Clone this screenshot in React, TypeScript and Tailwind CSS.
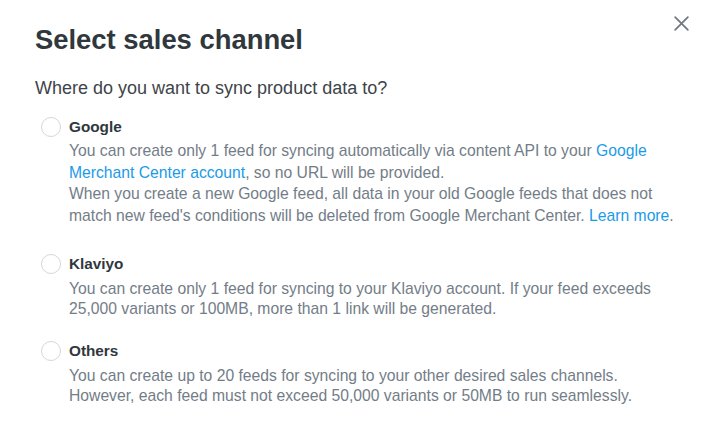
import { useState } from 'react';

type Channel = {
    id: string;
    label: string;
    leading: string;
    spacing: string;
    body: React.ReactNode;
};

const linkCls = 'text-[#1a9be8] hover:underline';

const channels: Channel[] = [
    {
        id: 'google',
        label: 'Google',
        leading: 'leading-[21.5px] mt-[2px]',
        spacing: 'mb-[27px]',
        body: (
            <>
                You can create only 1 feed for syncing automatically via content API to your{' '}
                <a href="#" className={linkCls}>Google Merchant Center account</a>, so no URL will be provided.
                <br />
                When you create a new Google feed, all data in your old Google feeds that does not match new feed's
                conditions will be deleted from Google Merchant Center.{' '}
                <a href="#" className={linkCls}>Learn more</a>.
            </>
        ),
    },
    {
        id: 'klaviyo',
        label: 'Klaviyo',
        leading: 'leading-[20px] mt-[4px]',
        spacing: 'mb-[21px]',
        body: (
            <>
                You can create only 1 feed for syncing to your Klaviyo account. If your feed exceeds 25,000 variants or
                100MB, more than 1 link will be generated.
            </>
        ),
    },
    {
        id: 'others',
        label: 'Others',
        leading: 'leading-[20px] mt-[4px]',
        spacing: '',
        body: (
            <>
                You can create up to 20 feeds for syncing to your other desired sales channels. However, each feed must
                not exceed 50,000 variants or 50MB to run seamlessly.
            </>
        ),
    },
];

export default function App() {
    const [selected, setSelected] = useState<string | null>(null);

    return (
        <div className="w-[716px] h-[440px] bg-white relative font-['Liberation_Sans',Arial,sans-serif]">
            {/* Close button */}
            <button className="absolute top-[14px] right-[25px] p-[1px] text-[#6d7882]">
                <svg width="17" height="17" viewBox="0 0 16 16" fill="none" stroke="currentColor" strokeWidth="1.6" strokeLinecap="round">
                    <path d="M2 2 L14 14 M14 2 L2 14" />
                </svg>
            </button>

            <div className="px-[35px] pt-[23px]">
                <h2 className="text-[27.4px] leading-[34px] font-bold text-[#30373d]">Select sales channel</h2>
                <p className="mt-[19px] text-[18px] leading-[24px] text-[#3d444a]">
                    Where do you want to sync product data to?
                </p>

                <div className="mt-[16px] flex flex-col">
                    {channels.map((c) => (
                        <label key={c.id} className={`flex gap-[8px] cursor-pointer ${c.spacing}`} onClick={() => setSelected(c.id)}>
                            <span className="ml-[6px] mt-[1px] w-[20px] h-[20px] shrink-0 rounded-full border border-[#d3d7db] bg-white flex items-center justify-center">
                                {selected === c.id && <span className="w-[10px] h-[10px] rounded-full bg-[#1a9be8]" />}
                            </span>
                            <div>
                                <div className="text-[15.3px] leading-[22px] font-bold text-[#30373d]">{c.label}</div>
                                <div className={`text-[15.7px] text-[#737d87] ${c.leading}`}>{c.body}</div>
                            </div>
                        </label>
                    ))}
                </div>
            </div>
        </div>
    );
}
